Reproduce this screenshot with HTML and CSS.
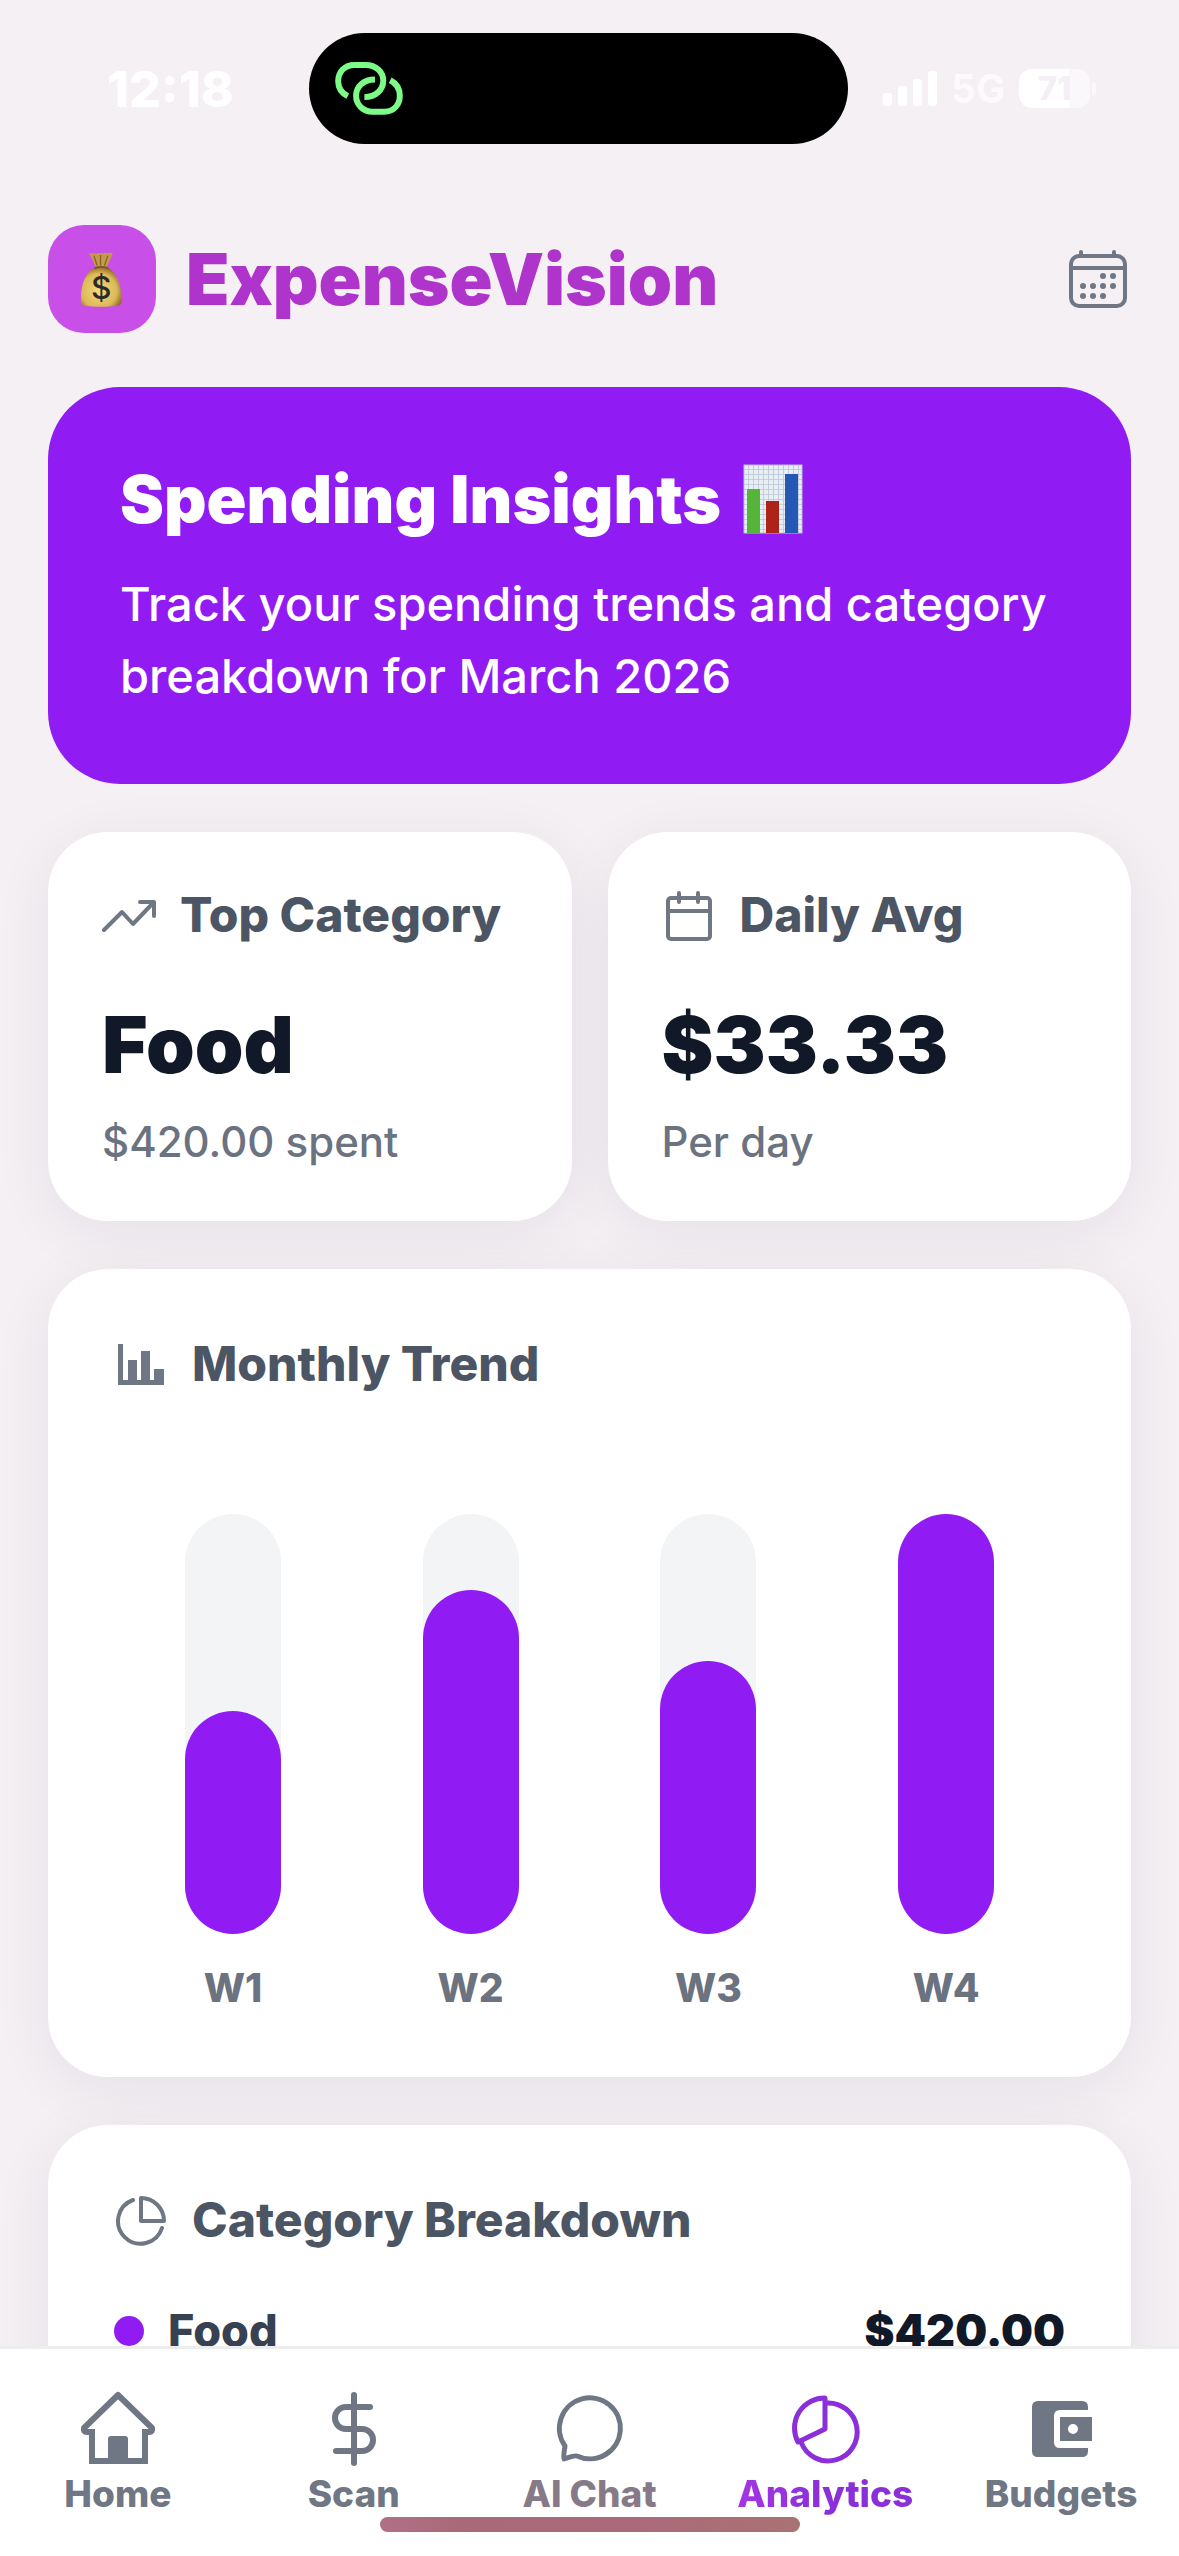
FILE: index.html
```html
<!DOCTYPE html>
<html lang="en">
<head>
<meta charset="utf-8">
<meta name="viewport" content="width=device-width, initial-scale=1">
<title>ExpenseVision – Analytics</title>
<link rel="stylesheet" href="styles.css">
</head>
<body>
<div class="app">
  <div class="status-bar">
    <time class="status-time">12:18</time>
    <div class="island">
      <svg class="island-icon" viewBox="36 60 216 172" fill="none" stroke="#7dfb87" stroke-width="18" aria-hidden="true">
        <path d="M80 169C60 159 51 143 51 124C51 95 72 75 100 75H134C165 75 187 96 187 122C187 150 165 172 130 172"/>
        <path d="M162 119C127 119 105 140 105 168C105 196 127 216 155 216H190C218 216 237 196 237 168C237 146 226 130 208 121"/>
      </svg>
    </div>
    <div class="status-right">
      <svg class="signal" viewBox="0 0 54 36" fill="#fff" aria-hidden="true">
        <rect x="0" y="22" width="9" height="13" rx="3"/>
        <rect x="15" y="15" width="9" height="20" rx="3"/>
        <rect x="30" y="8" width="9" height="27" rx="3"/>
        <rect x="45" y="0" width="9" height="35" rx="3"/>
      </svg>
      <span class="network">5G</span>
      <span class="battery"><span class="battery-level">71</span></span>
    </div>
  </div>

  <main class="content">
    <header class="header">
      <div class="logo">
        <svg class="logo-bag" viewBox="116 98 136 172" aria-hidden="true">
          <defs>
            <radialGradient id="bag" cx="45%" cy="60%" r="62%">
              <stop offset="0" stop-color="#f3dc7c"/>
              <stop offset=".7" stop-color="#dcb858"/>
              <stop offset="1" stop-color="#8a6322"/>
            </radialGradient>
          </defs>
          <path d="M142 104C150 108 156 102 164 106C172 100 180 108 190 103C198 106 206 100 215 105C210 120 202 132 197 146H163C158 130 150 118 142 104Z" fill="#c49a4c"/>
          <path d="M158 112L168 142M178 110V142M200 112L190 142" stroke="#8a6428" stroke-width="4" fill="none"/>
          <path d="M163 146H197C222 158 240 190 241 236C243 252 241 262 228 264C200 267 160 267 132 264C118 262 117 252 119 236C120 192 136 158 163 146Z" fill="url(#bag)"/>
          <path d="M160 150C172 145 188 145 200 150" stroke="#7c5822" stroke-width="6" fill="none"/>
          <text x="180" y="243" text-anchor="middle" class="bag-sign">$</text>
        </svg>
      </div>
      <h1 class="brand">ExpenseVision</h1>
      <button class="icon-button" type="button" aria-label="Choose date">
        <svg viewBox="0 0 66 66" fill="none" stroke="#6f7684" stroke-width="4" stroke-linecap="round" aria-hidden="true">
          <rect x="6" y="10" width="54" height="50" rx="8"/>
          <path d="M6 22H60M16 6V9M49 6V9"/>
          <g fill="#6f7684" stroke="none">
            <circle cx="38" cy="30" r="3"/><circle cx="48" cy="30" r="3"/>
            <circle cx="18" cy="40" r="3"/><circle cx="28" cy="40" r="3"/><circle cx="38" cy="40" r="3"/><circle cx="48" cy="40" r="3"/>
            <circle cx="18" cy="50" r="3"/><circle cx="28" cy="50" r="3"/><circle cx="38" cy="50" r="3"/>
          </g>
        </svg>
      </button>
    </header>

    <section class="hero">
      <h2 class="hero-title">Spending Insights
        <svg class="hero-chart" viewBox="0 0 60 70" aria-hidden="true">
          <defs>
            <pattern id="grid" width="5" height="5" patternUnits="userSpaceOnUse">
              <rect width="5" height="5" fill="#e9eef4"/>
              <path d="M0 0H5M0 0V5" stroke="#b9c6d6" stroke-width="1.6"/>
            </pattern>
          </defs>
          <rect x="1" y="1" width="58" height="68" fill="url(#grid)" stroke="#b7c3d8"/>
          <rect x="4" y="25" width="13" height="44" fill="#55b53b"/>
          <rect x="23" y="37" width="13" height="32" fill="#ad2318"/>
          <rect x="42" y="10" width="13" height="59" fill="#2557b4"/>
        </svg>
      </h2>
      <p class="hero-text">Track your spending trends and category breakdown for March 2026</p>
    </section>

    <div class="stats">
      <section class="card stat">
        <h3 class="card-title">
          <svg class="card-icon" viewBox="0 0 54 54" fill="none" stroke="#6f7684" stroke-width="4" stroke-linecap="round" stroke-linejoin="round" aria-hidden="true">
            <path d="M2 42L20 24L31 36L52 14M38 14H52V28"/>
          </svg>
          Top Category
        </h3>
        <p class="stat-value">Food</p>
        <p class="stat-note">$420.00 spent</p>
      </section>
      <section class="card stat">
        <h3 class="card-title">
          <svg class="card-icon" viewBox="0 0 54 54" fill="none" stroke="#6f7684" stroke-width="4" stroke-linecap="round" aria-hidden="true">
            <rect x="6" y="10" width="42" height="41" rx="3"/>
            <path d="M6 23H48M17 5V14M36 5V14"/>
          </svg>
          Daily Avg
        </h3>
        <p class="stat-value">$33.33</p>
        <p class="stat-note">Per day</p>
      </section>
    </div>

    <section class="card panel">
      <h3 class="card-title">
        <svg class="card-icon" viewBox="0 0 54 54" fill="#6f7684" aria-hidden="true">
          <path d="M4 7H9V43H14V23H23V43H27V14H36V43H40V32H50V48H4Z"/>
        </svg>
        Monthly Trend
      </h3>
      <div class="chart">
        <div class="week"><div class="track"><div class="bar" style="height:53%"></div></div><span>W1</span></div>
        <div class="week"><div class="track"><div class="bar" style="height:82%"></div></div><span>W2</span></div>
        <div class="week"><div class="track"><div class="bar" style="height:65%"></div></div><span>W3</span></div>
        <div class="week"><div class="track"><div class="bar" style="height:100%"></div></div><span>W4</span></div>
      </div>
    </section>

    <section class="card panel">
      <h3 class="card-title">
        <svg class="card-icon" viewBox="0 0 54 54" fill="none" stroke="#6f7684" stroke-width="4" stroke-linecap="round" stroke-linejoin="round" aria-hidden="true">
          <path d="M27 5A23 23 0 0 1 50 28H27Z"/>
          <path d="M19 7A22.500 22.500 0 1 0 48 35"/>
        </svg>
        Category Breakdown
      </h3>
      <div class="category">
        <span class="category-dot"></span>
        <span class="category-name">Food</span>
        <span class="category-amount">$420.00</span>
      </div>
    </section>
  </main>

  <nav class="tabs" aria-label="Main">
    <a class="tab" href="#home">
      <svg class="tab-icon" viewBox="0 0 78 78" fill="none" stroke="currentColor" stroke-width="6" stroke-linejoin="round" aria-hidden="true">
        <path d="M13 42V71H66V42" stroke-linejoin="miter"/>
        <path d="M39 5L5 38Q4 42 8 42H16M63 42H70Q74 42 73 38L39 5L36 8"/>
        <path d="M29 74V49Q29 46 32 46H46Q49 46 49 49V74Z" fill="currentColor" stroke="none"/>
      </svg>
      <span>Home</span>
    </a>
    <a class="tab" href="#scan">
      <svg class="tab-icon" viewBox="0 0 78 78" fill="none" stroke="currentColor" stroke-width="6" stroke-linecap="round" aria-hidden="true">
        <path d="M39 5V73M55 17H31A11 11 0 0 0 31 39H47A11 11 0 0 1 47 61H21"/>
      </svg>
      <span>Scan</span>
    </a>
    <a class="tab" href="#chat">
      <svg class="tab-icon" viewBox="0 0 78 78" fill="none" stroke="currentColor" stroke-width="5" stroke-linejoin="round" aria-hidden="true">
        <path d="M15 56A30.500 30.500 0 1 1 27 66Q25 65 14 69Q13 68 15 56Z"/>
      </svg>
      <span class="tab-label-chat">AI Chat</span>
    </a>
    <a class="tab tab-active" href="#analytics" aria-current="page">
      <svg class="tab-icon" viewBox="0 0 78 78" fill="none" stroke="currentColor" stroke-width="5" stroke-linejoin="round" aria-hidden="true">
        <path d="M39 8V39L12 52A30 30 0 0 1 39 8Z"/>
        <path d="M40 13A29 29 0 1 1 15 52"/>
      </svg>
      <span class="tab-label-active">Analytics</span>
    </a>
    <a class="tab" href="#budgets">
      <svg class="tab-icon" viewBox="0 0 78 78" fill="currentColor" aria-hidden="true">
        <path d="M16 11H60Q66 11 66 17V20H38Q32 20 32 26V52Q32 58 38 58H66V61Q66 67 60 67H16Q10 67 10 61V17Q10 11 16 11Z"/>
        <path fill-rule="evenodd" d="M38 27H70V51H38ZM51 34A5 5 0 1 0 51 44A5 5 0 1 0 51 34Z"/>
      </svg>
      <span>Budgets</span>
    </a>
    <span class="home-indicator"></span>
  </nav>
</div>
</body>
</html>
```
FILE: styles.css
```css
* {
  box-sizing: border-box;
}

body,
h1,
h2,
h3,
p {
  margin: 0;
}

body {
  background: #f5f0f4;
  color: #111827;
  font-family: Inter, "Liberation Sans", sans-serif;
}

.app {
  display: flex;
  flex-direction: column;
  height: 100vh;
}

/* Status bar */
.status-bar {
  display: grid;
  grid-template-columns: minmax(0, 28fr) 539px minmax(0, 30fr);
  align-items: center;
  flex: none;
  height: 177px;
}

.status-time {
  padding-left: 32px;
  color: #fff;
  font-size: 50px;
  font-weight: 800;
  text-align: center;
}

.island {
  display: flex;
  align-items: center;
  height: 111px;
  padding-left: 24px;
  border-radius: 56px;
  background: #000;
}

.island-icon {
  width: 72px;
  height: 57px;
}

.status-right {
  display: flex;
  align-items: center;
  gap: 14px;
  padding-left: 35px;
  color: #fff;
}

.signal {
  width: 54px;
  height: 36px;
}

.network {
  color: #fcfafc;
  font-size: 39px;
  font-weight: 700;
}

.battery {
  display: flex;
  align-items: center;
  gap: 2px;
}

.battery::after {
  width: 4px;
  height: 14px;
  border-radius: 0 4px 4px 0;
  background: #faf8fa;
  content: "";
}

.battery-level {
  width: 71px;
  height: 39px;
  border-radius: 13px;
  background: linear-gradient(90deg, #fff 71%, #faf8fa 71%);
  color: #f4eff4;
  font-size: 33px;
  font-weight: 800;
  line-height: 39px;
  text-align: center;
}

/* Scrolling content */
.content {
  display: flex;
  flex: 1;
  flex-direction: column;
  gap: 48px;
  min-height: 0;
  padding: 48px;
  overflow-y: auto;
  scrollbar-width: none;
}

.content > * {
  flex: none;
}

.header {
  display: flex;
  align-items: center;
  gap: 30px;
  padding-bottom: 6px;
}

.logo {
  display: flex;
  align-items: center;
  justify-content: center;
  width: 108px;
  height: 108px;
  border-radius: 36px;
  background: #c850e8;
}

.logo-bag {
  width: 45px;
  height: 57px;
}

.bag-sign {
  fill: #2c2a2c;
  font-size: 96px;
  font-weight: 500;
}

.brand {
  flex: 1;
  color: #ae34cc;
  font-size: 71px;
  font-weight: 900;
  line-height: 84px;
}

.icon-button {
  width: 66px;
  height: 66px;
  padding: 0;
  border: 0;
  background: none;
}

/* Hero */
.hero {
  padding: 72px;
  border-radius: 72px;
  background: #911bf3;
  color: #fff;
}

.hero-title {
  display: flex;
  align-items: center;
  gap: 22px;
  font-size: 66px;
  font-weight: 900;
  line-height: 80px;
}

.hero-chart {
  width: 60px;
  height: 70px;
}

.hero-text {
  margin-top: 29px;
  font-size: 47px;
  font-weight: 500;
  line-height: 72px;
}

/* Cards */
.card {
  border-radius: 60px;
  background: #fff;
  box-shadow: 0 12px 60px rgba(17, 24, 39, 0.07);
}

.card-title {
  display: flex;
  align-items: center;
  gap: 24px;
  color: #4b5563;
  font-size: 48px;
  font-weight: 800;
  line-height: 58px;
  white-space: nowrap;
}

.card-icon {
  flex: none;
  width: 54px;
  height: 54px;
}

.stats {
  display: grid;
  grid-template-columns: 1fr 1fr;
  gap: 36px;
}

.stat {
  padding: 54px;
}

.stat-value {
  margin-top: 55px;
  font-size: 78px;
  font-weight: 900;
  line-height: 92px;
}

.stat-note {
  margin-top: 26px;
  color: #6b7280;
  font-size: 42px;
  font-weight: 500;
  line-height: 50px;
}

.panel {
  padding: 66px;
}

/* Weekly chart */
.chart {
  display: grid;
  grid-template-columns: repeat(4, 1fr);
  margin-top: 121px;
}

.week {
  display: flex;
  flex-direction: column;
  align-items: center;
  gap: 30px;
  color: #6b7280;
  font-size: 39px;
  font-weight: 800;
  line-height: 47px;
}

.track {
  display: flex;
  align-items: flex-end;
  width: 96px;
  height: 420px;
  border-radius: 48px;
  background: #f3f4f6;
}

.bar {
  width: 100%;
  border-radius: 48px;
  background: #911bf3;
}

/* Category list */
.category {
  display: flex;
  align-items: center;
  gap: 24px;
  margin-top: 55px;
  font-size: 45px;
  line-height: 54px;
}

.category-dot {
  width: 30px;
  height: 30px;
  border-radius: 50%;
  background: #911bf3;
}

.category-name {
  flex: 1;
  color: #374151;
  font-weight: 800;
}

.category-amount {
  font-weight: 900;
}

/* Bottom tabs */
.tabs {
  position: relative;
  display: grid;
  grid-template-columns: repeat(5, 1fr);
  flex: none;
  padding: 41px 0 38px;
  border-top: 3px solid #ededee;
  background: #fff;
}

.tab {
  display: flex;
  flex-direction: column;
  align-items: center;
  gap: 2px;
  color: #6f7684;
  font-size: 37px;
  font-weight: 800;
  line-height: 48px;
  text-decoration: none;
}

.tab-active {
  color: #8b2fd9;
}

.tab-label-chat {
  color: #877a88;
}

.tab-label-active {
  background: linear-gradient(90deg, #a436e4, #8b2fd9 50%);
  background-clip: text;
  color: transparent;
}

.tab-icon {
  width: 78px;
  height: 78px;
}

.home-indicator {
  position: absolute;
  bottom: 24px;
  left: 50%;
  width: 420px;
  height: 15px;
  border-radius: 8px;
  background: linear-gradient(90deg, #b07088, #a86a78 20%, #ab6a7c 60%, #a87272);
  transform: translateX(-50%);
}
```
